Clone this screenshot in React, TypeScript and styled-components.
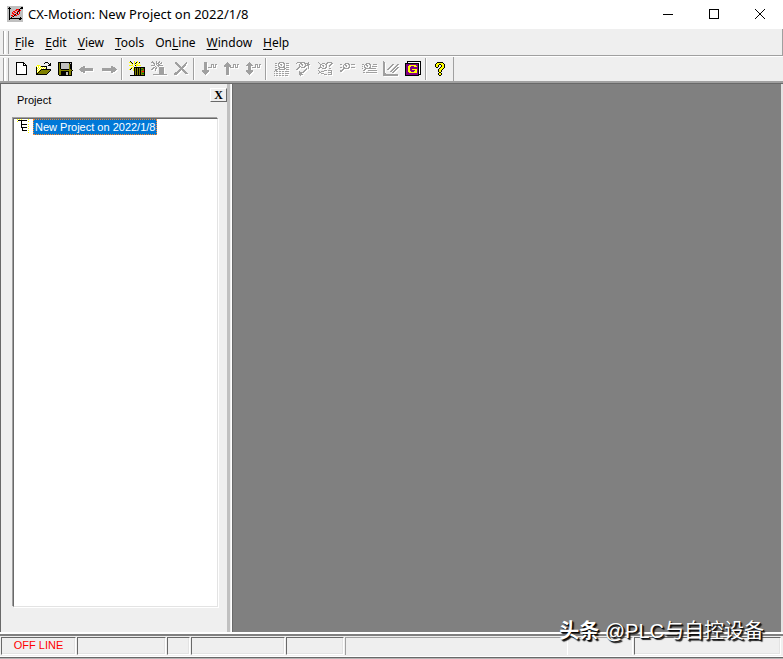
import React from "react";
import styled, { createGlobalStyle, css } from "styled-components";

const GlobalStyle = createGlobalStyle`
  * { box-sizing: border-box; }
  html, body, #root { height: 100%; margin: 0; }
  body { background: #efefef; color: #000; font-family: "Noto Sans", "Noto Sans CJK SC", sans-serif; overflow: hidden; }
  button { font: inherit; color: inherit; padding: 0; border: 0; background: none; }
`;

const palette: Record<string, string> = {
  k: "#000000", w: "#ffffff", y: "#ffff00", o: "#808000", s: "#c0c0c0",
  g: "#a0a0a0", p: "#800080", r: "#ff0000", n: "#008000",
};

const icons: Record<string, string[]> = {
  newFile: [
    "", "...kkkkkkkk", "...kwwwwwwkk", "...kwwwwwwkwk", "...kwwwwwwkkkk", "...kwwwwwwwwwk",
    "...kwwwwwwwwwk", "...kwwwwwwwwwk", "...kwwwwwwwwwk", "...kwwwwwwwwwk", "...kwwwwwwwwwk",
    "...kwwwwwwwwwk", "...kwwwwwwwwwk", "...kkkkkkkkkkk",
  ],
  open: [
    "", "..........kkk", ".........k...k.k", "..............kk", "..yyy........kkk", ".ywywykkkkkk",
    ".kwywywywywk", ".kywywywywyk", ".kwywykkkkkkkkkk", ".kywykoooooooook", ".kwykoooooooook",
    ".kykoooooooook", ".kkoooooooook", ".kkkkkkkkkkk",
  ],
  save: [
    "", ".kkkkkkkkkkkkkk", ".kokssssssssksk", ".kokssssssssokk", ".kokssssssssokk", ".kokssssssssokk",
    ".kokssssssssokk", ".kokssssssssokk", ".kookkkkkkkkook", ".koooooooooooook", ".kookkkkkkkkook",
    ".kookkkkksskook", ".kookkkkksskook", ".kookkkkksskook", "..kkkkkkkkkkkkk",
  ],
  back: ["", "", "", "", "", "....gg", "..gggg", ".ggggggggggggg", "gggggggggggggg", ".ggggggggggggg", "..gggg", "....gg"],
  forward: ["", "", "", "", "", "..........gg", "..........gggg", ".gggggggggggggg", ".ggggggggggggggg", ".gggggggggggggg", "..........gggg", "..........gg"],
  addUnit: [
    ".k...y..y", "yyk..y.ky.k", "..yk.yky.yy", "...y.y.yy", "yyyy..kyyyyy", "....y..y", "..yy.kkkkkkkkkkk", ".yk.ykokokokoonk",
    "yk..ykokokoknnrk", "....ykokokokoook", ".....kokokokorrk", ".....kokokokoook", ".....kokokokonnk", ".....kokokokoook", ".kkkkkkkkkkkkkkk",
  ],
  addAxis: [
    ".g...g..g", "ggg..g.gg.g", "..gg.ggg.gg", "...g.g.gg", "gggg..gggggg", "....g..g", "..gg.g..ggggg", ".gg.gg..ggggg",
    "gg..g...ggggg", "....g...ggggg", "........ggggg", "........ggggg", "........ggggg", "..gggggggggggggg",
  ],
  remove: [
    "", "..gg.........g", "..ggg.......gg", "...ggg.....gg", "....ggg...ggg", ".....ggg.ggg", "......ggggg",
    ".......ggg", "......ggggg", ".....ggg.ggg", "....ggg...ggg", "..gggg.....ggg", ".gggg.......ggg", ".ggg",
  ],
  download: [
    "", "...ggg", "...ggg", "...ggg....ggg.gg", "...ggg....g.g.g", "...ggg....g.g.g", "...ggg.gggg.ggg", "...ggg",
    "...ggg", ".ggggggg", ".ggggggg", "..ggggg", "...ggg", "....g",
  ],
  upload: [
    "", "....g", "...ggg", "..ggggg...ggg.gg", ".ggggggg..g.g.g", ".ggggggg..g.g.g", "...ggg.gggg.ggg", "...ggg",
    "...ggg", "...ggg", "...ggg", "...ggg", "...ggg", "...ggg",
  ],
  compare: [
    "", "....g", "...ggg", "..ggggg...ggg.gg", ".ggggggg..g.g.g", "...ggg....g.g.g", "...ggg.gggg.ggg", "...ggg",
    "...ggg", ".ggggggg", ".ggggggg", "..ggggg", "...ggg", "....g",
  ],
  monitorList: [
    "", "......ggggg", "..gg.gg...gg.ggg", ".....g.gg..g", "..gg.g..g..g.ggg", ".....gg...gg", "..gg..gggggg.ggg",
    ".....gg....gg", "..ggg.gggggg.ggg", "..gg", ".g.gg.gg.gg.gggg", "", ".g.gg.gg.gg.gggg", "", ".g.gg.gg.gg.ggg",
  ],
  monitorAxis: [
    "", "..gggggggg...g", ".g...gg..ggggg", "....g.gg..g.ggg", "....g..g..gggg", "....gg...gg..g", "...gg.gggg...g",
    "..gg.......g.g", ".gg.......gg", ".........gg", "....g...gg", "....ggggg", "....ggg", "....gggg", ".....g",
  ],
  monitorIO: [
    "", ".g........ggggg", "..g..ggg.gg...gg", "...gg...gg...gg", "...g.gg..g..gg", "...g..g..g..g",
    "..ggg...gg", ".gg..gggg...gg", "", ".g.....ggg.gggg", "..g.ggg.......g", "..gg.......gggg", ".g..ggg.......g", ".......ggg.gggg",
  ],
  findData: [
    "", "", "......gggg", ".gg..gg..gg.gggg", "....g.gg..g", "....g..g..g", ".gg.gg...gg.gggg", "....gggggg",
    "...gg", ".ggg", ".gg",
  ],
  listData: [
    "", "", ".....gggg", ".gg.gg..gg..gggg", "...g.gg..g", ".g.g..g..g.ggggg", "...gg...gg", ".g..ggggggggggg",
    "...gg", "..gg...ggggggggg", "", "..gg.ggggggggggg",
  ],
  chart: [
    "g", "gg", "gg", "gg.......gg...gg", "gg......gg...gg", "gg.....gg...gg", "gg....gg...gg.gg", "gg...gg...gg.gg",
    "gg..gg...gg.gg", "gg......gg.gg", "gg.....gg.gg", "gg.......gg", "ggg", "ggggggggggggggg", "ggggggggggggggg",
  ],
  gProgram: [
    "..kkkkkkkkkkkkkk", "..kwwwwwwwwwwwwk", "kkkkkkkkkkkkkkwk", "kppppppppppppkwk", "kpppyyyyyyyppkwk", "kppyyypppyyypkwk",
    "kppyyppppppppkwk", "kppyyppppppppkwk", "kppyyppyyyyypkwk", "kppyypppppyypkwk", "kppyyypppyyypkwk",
    "kpppyyyyyyyypkwk", "kppppppppppppkwk", "kppppppppppppkkk", "kkkkkkkkkkkkkk",
  ],
  help: [
    "", "....kkkkkk", "...kyyyyyyk", "..kyyykkyyyk", "..kyyk..kyyk", "..kyyk..kyyk", "...kk..kyyyk", "......kyyyk",
    ".....kyyyk", ".....kyyk", ".....kyyk", "......kk", ".....kyyk", ".....kyyk", "......kk",
  ],
  app: [
    "ssssssssssssssss", "sskssssssssssskk", "skkkssssssssskkk", "sskssssssrrrksss", "ssksssssrrsrkrss", "ssksssrrssrkrsss",
    "sskssrsrrsksrsss", "sskssrrssrksrsss", "ssksssrrksrrssss", "ssksrrskrrssssss", "sskssrksssssssss", "ssksksssssssskss",
    "sskkkkkkkkkkkkks", "sskssssssssskkss", "ssssssssssssssss", "ssssssssssssssss",
  ],
  tree: [
    "y.y.y......y", ".kkkkkkkkk", "y...k......y", "....k", "....k", "....kkkkkk.y", "....k", "....k......y",
    "....kkkkkk", ".....k.....y", ".....k", ".....kkkkk.y", "", "...........y",
  ],
};

const Pixels = styled.svg`
  display: block;
  flex: none;
  width: 16px;
  height: 16px;
  overflow: visible;
`;

function PixelIcon({ name, raised }: { name: string; raised?: boolean }) {
  const paths: Record<string, string> = {};
  icons[name].forEach((row, y) => {
    [...row].forEach((ch, x) => {
      if (ch !== ".") paths[ch] = (paths[ch] || "") + `M${x} ${y}h1v1h-1z`;
    });
  });
  return (
    <Pixels viewBox="0 0 16 16" shapeRendering="crispEdges" aria-hidden="true">
      {raised && <path d={paths.g} fill="#fff" transform="translate(1 1)" />}
      {Object.entries(paths).map(([ch, d]) => <path key={ch} d={d} fill={palette[ch]} />)}
    </Pixels>
  );
}

const Window = styled.div`
  display: flex;
  flex-direction: column;
  height: 100vh;
  background: #efefef;
`;

const TitleBar = styled.header`
  display: flex;
  align-items: center;
  height: 29px;
  flex: none;
  padding: 0 0 2px 7px;
  background: #fff;
`;

const Title = styled.h1`
  margin: 0 auto 0 5px;
  font-size: 13px;
  line-height: 20px;
  font-weight: 400;
`;

const CaptionButton = styled.button`
  display: grid;
  place-items: center;
  width: 46px;
  height: 26px;
`;

const MenuBar = styled.nav`
  display: flex;
  align-items: center;
  height: 27px;
  flex: none;
  padding-left: 3px;
  border-right: 1px solid #a0a0a0;
  border-bottom: 1px solid #a0a0a0;
`;

const Grip = styled.span`
  width: 6px;
  height: 23px;
  flex: none;
  border: solid #a0a0a0;
  border-width: 0 1px;
  background: linear-gradient(90deg, #fff 0 2px, #efefef 2px);
`;

const MenuItems = styled.div`
  display: flex;
  gap: 1px;
  padding: 2px 0 0 1px;
`;

const MenuItem = styled.button`
  padding: 0 5px;
  font-size: 12px;
  line-height: 20px;
  u { text-underline-offset: 2px; }
`;

const ToolRow = styled.div`
  display: flex;
  height: 27px;
  flex: none;
  border-top: 1px solid #fff;
  border-bottom: 2px solid #a0a0a0;
`;

const Toolbar = styled.div`
  display: flex;
  align-items: center;
  padding: 0 1px 0 3px;
  border-right: 1px solid #a0a0a0;
`;

const ToolGroup = styled.div`
  display: flex;
  &:first-of-type { padding-left: 1px; }
`;

const ToolButton = styled.button`
  display: grid;
  place-items: center;
  width: 22px;
  height: 22px;
`;

const Divider = styled.span`
  width: 2px;
  height: 22px;
  margin: 0 3px 0 1px;
  border-left: 1px solid #a0a0a0;
  border-right: 1px solid #fff;
`;

const Workspace = styled.main`
  display: flex;
  flex: 1;
  min-height: 0;
  border-top: 1px solid #696969;
  border-bottom: 2px solid #fff;
`;

const ProjectPane = styled.aside`
  display: flex;
  flex-direction: column;
  width: 227px;
  flex: none;
  padding: 4px 0 25px;
  border-left: 1px solid #696969;
`;

const PaneHeader = styled.div`
  display: flex;
  justify-content: space-between;
  align-items: flex-start;
  height: 30px;
  padding-left: 16px;
`;

const PaneTitle = styled.h2`
  margin: 4px 0 0;
  font: 400 11px/16px "Liberation Sans", Arial, sans-serif;
`;

const CloseButton = styled.button`
  width: 17px;
  height: 14px;
  border: 1px solid;
  border-color: #fff #696969 #696969 #fff;
  font: 700 12px/11px "Liberation Serif", serif;
`;

const Tree = styled.ul`
  flex: 1;
  margin: 0 9px 0 12px;
  padding: 0 0 0 3px;
  list-style: none;
  background: #fff;
  border: 1px solid;
  border-color: #696969 #e3e3e3 #e3e3e3 #696969;
  box-shadow: 1px 1px #fff, -1px -1px #a0a0a0;
`;

const TreeItem = styled.li`
  display: flex;
  align-items: center;
  height: 16px;
`;

const TreeLabel = styled.button`
  height: 16px;
  padding: 0 1px;
  font: 400 11px/14px "Liberation Sans", Arial, sans-serif;
  color: #fff;
  background: #0078d7;
  border: 1px dotted #ff8728;
`;

const Splitter = styled.div`
  width: 6px;
  flex: none;
  background: linear-gradient(90deg, #c0c0c0 0 3px, #efefef 3px 4px, #fff 4px 5px, #696969 5px);
`;

const Canvas = styled.section`
  flex: 1;
  background: #808080;
  border-right: 1px solid #e3e3e3;
  box-shadow: inset -1px 0 #e3e3e3;
`;

const StatusBar = styled.footer`
  display: flex;
  gap: 1px;
  height: 23px;
  flex: none;
  padding: 1px 2px 1px 1px;
  border-top: 2px solid #808080;
  border-bottom: 1px solid #fff;
`;

const StatusCell = styled.div<{ $width?: number; $flat?: boolean; $grow?: boolean }>`
  width: ${(p) => (p.$width ? `${p.$width}px` : "auto")};
  flex: ${(p) => (p.$grow ? "1" : "none")};
  border: solid #a0a0a0;
  border-width: 1px 1px 0 1px;
  border-right-color: #fff;
  font: 400 11px/15px "Liberation Sans", Arial, sans-serif;
  color: #f00;
  text-align: center;
  ${(p) => p.$flat && !p.$grow && css`
    border-left-color: #efefef;
  `}
  ${(p) => !p.$flat && css`
    border-color: #696969 #fff #fff #696969;
    border-bottom-width: 1px;
    box-shadow: inset -1px -1px #e3e3e3;
  `}
`;

const BottomEdge = styled.div`
  height: 2px;
  flex: none;
  border-top: 1px solid #696969;
  background: #b4b4b4;
`;

const Signature = styled.div`
  position: absolute;
  right: 19px;
  bottom: 14px;
  font: 400 20px/28px "Liberation Sans", "Noto Sans CJK SC", sans-serif;
  color: #fff;
  text-shadow: 1px 1px 1px #000, 2px 2px 1px #222;
  white-space: nowrap;
  b { font-weight: 700; }
`;

const menus: [string, string, string][] = [
  ["", "F", "ile"], ["", "E", "dit"], ["", "V", "iew"], ["", "T", "ools"],
  ["On", "L", "ine"], ["", "W", "indow"], ["", "H", "elp"],
];

type Tool = { icon: string; label: string; enabled?: boolean };
const toolGroups: Tool[][] = [
  [
    { icon: "newFile", label: "New", enabled: true }, { icon: "open", label: "Open", enabled: true },
    { icon: "save", label: "Save", enabled: true }, { icon: "back", label: "Back" }, { icon: "forward", label: "Forward" },
  ],
  [{ icon: "addUnit", label: "Add unit", enabled: true }, { icon: "addAxis", label: "Add axis" }, { icon: "remove", label: "Delete" }],
  [{ icon: "download", label: "Download" }, { icon: "upload", label: "Upload" }, { icon: "compare", label: "Verify" }],
  [
    { icon: "monitorList", label: "Monitor" }, { icon: "monitorAxis", label: "Axis monitor" }, { icon: "monitorIO", label: "I/O monitor" },
    { icon: "findData", label: "Position data" }, { icon: "listData", label: "Data list" }, { icon: "chart", label: "Trace" },
    { icon: "gProgram", label: "G program", enabled: true },
  ],
  [{ icon: "help", label: "Help", enabled: true }],
];

export default function App() {
  return (
    <Window>
      <GlobalStyle />
      <TitleBar>
        <PixelIcon name="app" />
        <Title>CX-Motion: New Project on 2022/1/8</Title>
        <CaptionButton aria-label="Minimize">
          <svg width="10" height="10" shapeRendering="crispEdges"><path d="M0 5h10v1H0z" /></svg>
        </CaptionButton>
        <CaptionButton aria-label="Maximize">
          <svg width="10" height="10" fill="none" stroke="#000"><rect x=".5" y=".5" width="9" height="9" /></svg>
        </CaptionButton>
        <CaptionButton aria-label="Close">
          <svg width="10" height="10" stroke="#000"><path d="M0 0l10 10M10 0L0 10" /></svg>
        </CaptionButton>
      </TitleBar>
      <MenuBar>
        <Grip />
        <MenuItems>
          {menus.map(([before, key, after]) => (
            <MenuItem key={key}>{before}<u>{key}</u>{after}</MenuItem>
          ))}
        </MenuItems>
      </MenuBar>
      <ToolRow>
        <Toolbar role="toolbar">
          <Grip />
          {toolGroups.map((group, i) => (
            <React.Fragment key={i}>
              {i > 0 && <Divider />}
              <ToolGroup>
                {group.map((t) => (
                  <ToolButton key={t.icon} aria-label={t.label} disabled={!t.enabled}>
                    <PixelIcon name={t.icon} raised={!t.enabled} />
                  </ToolButton>
                ))}
              </ToolGroup>
            </React.Fragment>
          ))}
        </Toolbar>
      </ToolRow>
      <Workspace>
        <ProjectPane>
          <PaneHeader>
            <PaneTitle>Project</PaneTitle>
            <CloseButton aria-label="Close project pane">X</CloseButton>
          </PaneHeader>
          <Tree>
            <TreeItem>
              <PixelIcon name="tree" />
              <TreeLabel>New Project on 2022/1/8</TreeLabel>
            </TreeItem>
          </Tree>
        </ProjectPane>
        <Splitter />
        <Canvas />
      </Workspace>
      <StatusBar>
        <StatusCell $width={75}>OFF LINE</StatusCell>
        <StatusCell $width={89} />
        <StatusCell $width={23} />
        <StatusCell $width={94} />
        <StatusCell $width={58} />
        <StatusCell $flat $grow />
        <StatusCell $flat $width={64} />
        <StatusCell $width={147} />
      </StatusBar>
      <BottomEdge />
      <Signature><b>头条</b> @PLC与自控设备</Signature>
    </Window>
  );
}
